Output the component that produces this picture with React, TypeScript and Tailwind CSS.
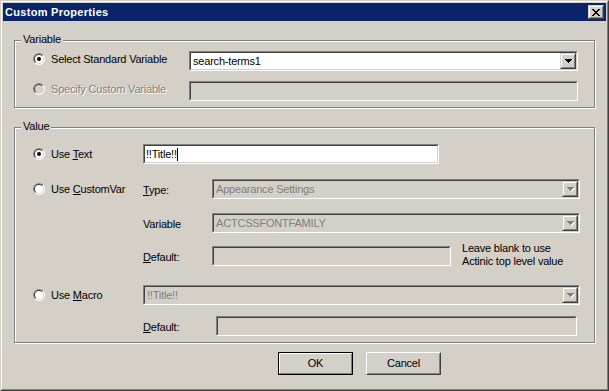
import type { ReactNode } from 'react';

const sunken = 'border border-t-[#808080] border-l-[#808080] border-r-white border-b-white';
const sunkenInner = 'border border-t-[#404040] border-l-[#404040] border-r-[#d4d0c8] border-b-[#d4d0c8]';
const raised = 'border border-t-[#d4d0c8] border-l-[#d4d0c8] border-r-[#404040] border-b-[#404040]';
const raisedInner = 'border border-t-white border-l-white border-r-[#808080] border-b-[#808080]';
const disabledText = 'text-[#808080] [text-shadow:1px_1px_0_#fff]';

function Radio({ checked, disabled }: { checked?: boolean; disabled?: boolean }) {
  return (
    <svg width="12" height="12" viewBox="0 0 12 12" className="shrink-0">
      <circle cx="6" cy="6" r="6" fill="#fff" />
      <path d="M1.757 10.243A6 6 0 0 1 10.243 1.757Z" fill="#808080" />
      <circle cx="6" cy="6" r="5" fill="#d4d0c8" />
      <path d="M2.464 9.536A5 5 0 0 1 9.536 2.464Z" fill="#404040" />
      <circle cx="6" cy="6" r="4" fill={disabled ? '#d4d0c8' : '#fff'} />
      {checked && <circle cx="6" cy="6" r="2" fill="#000" />}
    </svg>
  );
}

function Arrow({ disabled }: { disabled?: boolean }) {
  const d = 'M0 0h7v1h-1v1h-1v1h-1v1h-1v-1h-1v-1h-1v-1h-1z';
  return (
    <svg width="8" height="5" viewBox="0 0 8 5" shapeRendering="crispEdges">
      {disabled && <path d={d} fill="#fff" transform="translate(1 1)" />}
      <path d={d} fill={disabled ? '#808080' : '#000'} />
    </svg>
  );
}

function DropButton({ disabled }: { disabled?: boolean }) {
  return (
    <div className={`${raised} w-[16px] h-full shrink-0`}>
      <div className={`${raisedInner} h-full bg-[#d4d0c8] flex items-center justify-center pl-px pt-px`}>
        <Arrow disabled={disabled} />
      </div>
    </div>
  );
}

function Combo({ className, value, disabled }: { className: string; value: string; disabled?: boolean }) {
  return (
    <div className={`${sunken} h-[20px] shrink-0 ${className}`}>
      <div className={`${sunkenInner} h-full flex items-center ${disabled ? 'bg-[#d4d0c8]' : 'bg-white'}`}>
        <span className={`flex-1 pl-[2px] truncate ${disabled ? 'text-[#808080]' : 'text-black'}`}>{value}</span>
        <DropButton disabled={disabled} />
      </div>
    </div>
  );
}

function TextField({ className, children, disabled }: { className: string; children?: ReactNode; disabled?: boolean }) {
  return (
    <div className={`${sunken} h-[20px] shrink-0 ${className}`}>
      <div className={`${sunkenInner} h-full flex items-center pl-px ${disabled ? 'bg-[#d4d0c8]' : 'bg-white'}`}>
        {children}
      </div>
    </div>
  );
}

function GroupBox({ label, className, children }: { label: string; className: string; children: ReactNode }) {
  return (
    <div className={`relative flex flex-col border border-[#808080] shadow-[inset_1px_1px_0_#fff,1px_1px_0_#fff] ${className}`}>
      <span className="absolute -top-[8px] left-[6px] bg-[#d4d0c8] px-[2px] leading-[13px]">{label}</span>
      {children}
    </div>
  );
}

function CloseButton() {
  return (
    <div className={`${raised} w-[16px] h-[14px] shrink-0`}>
      <div className={`${raisedInner} h-full bg-[#d4d0c8] flex items-center justify-center`}>
        <svg width="8" height="7" viewBox="0 0 8 7" shapeRendering="crispEdges">
          <path
            fill="#000"
            d="M0 0h2v1h-2z M6 0h2v1h-2z M1 1h2v1h-2z M5 1h2v1h-2z M2 2h4v1h-4z M3 3h2v1h-2z M2 4h4v1h-4z M1 5h2v1h-2z M5 5h2v1h-2z M0 6h2v1h-2z M6 6h2v1h-2z"
          />
        </svg>
      </div>
    </div>
  );
}

export default function App() {
  return (
    <div className="w-[609px] h-[391px] bg-[#d4d0c8] border border-t-[#d4d0c8] border-l-[#d4d0c8] border-r-[#404040] border-b-[#404040] font-['Liberation_Sans',Arial,sans-serif] text-[11px] leading-[13px] tracking-[-0.2px] text-black select-none">
      <div className="h-full border border-t-white border-l-white border-r-[#808080] border-b-[#808080] p-px flex flex-col">
        {/* title bar */}
        <div className="h-[18px] bg-[#0a246a] flex items-center pl-[2px] pr-[2px]">
          <span className="flex-1 text-white font-bold tracking-[0.3px]">Custom Properties</span>
          <CloseButton />
        </div>

        <div className="px-[11px] pt-[19px] flex flex-col">
          {/* Variable */}
          <GroupBox label="Variable" className="h-[68px] pt-[10px] pl-[18px] gap-[10px]">
            <div className="flex items-center h-[20px]">
              <div className="w-[156px] flex items-center gap-[6px] mb-[4px]">
                <Radio checked />
                <span>Select Standard Variable</span>
              </div>
              <Combo className="w-[389px]" value="search-terms1" />
            </div>
            <div className="flex items-center h-[20px]">
              <div className="w-[156px] flex items-center gap-[6px] mb-[4px]">
                <Radio disabled />
                <span className={disabledText}>Specify Custom Variable</span>
              </div>
              <TextField className="w-[389px]" disabled />
            </div>
          </GroupBox>

          {/* Value */}
          <GroupBox label="Value" className="h-[216px] mt-[19px] pt-[16px] pl-[18px]">
            <div className="flex items-center h-[20px]">
              <div className="w-[110px] flex items-center gap-[6px]">
                <Radio checked />
                <span>
                  Use <span className="underline">T</span>ext
                </span>
              </div>
              <TextField className="w-[296px]">
                <span>!!Title!!</span>
                <span className="w-px h-[13px] bg-black" />
              </TextField>
            </div>

            <div className="flex items-center h-[20px] mt-[15px]">
              <div className="w-[110px] flex items-center gap-[6px]">
                <Radio />
                <span>
                  Use <span className="underline">C</span>ustomVar
                </span>
              </div>
              <span className="w-[69px] mt-[3px]">
                <span className="underline">T</span>ype:
              </span>
              <Combo className="w-[368px]" value="Appearance Settings" disabled />
            </div>

            <div className="flex items-center h-[20px] mt-[14px]">
              <div className="w-[110px]" />
              <span className="w-[69px] mt-[3px]">Variable</span>
              <Combo className="w-[368px]" value="ACTCSSFONTFAMILY" disabled />
            </div>

            <div className="flex items-start h-[20px] mt-[13px]">
              <div className="w-[110px]" />
              <span className="w-[69px] self-center mt-[3px]">
                <span className="underline">D</span>efault:
              </span>
              <TextField className="w-[239px]" disabled />
              <div className="ml-[11px] -mt-[4px] flex flex-col">
                <span>Leave blank to use</span>
                <span>Actinic top level value</span>
              </div>
            </div>

            <div className="flex items-center h-[20px] mt-[19px]">
              <div className="w-[110px] flex items-center gap-[6px]">
                <Radio />
                <span>
                  Use <span className="underline">M</span>acro
                </span>
              </div>
              <Combo className="w-[437px]" value="!!Title!!" disabled />
            </div>

            <div className="flex items-center h-[20px] mt-[11px]">
              <div className="w-[110px]" />
              <span className="w-[73px] mt-[3px]">
                <span className="underline">D</span>efault:
              </span>
              <TextField className="w-[361px]" disabled />
            </div>
          </GroupBox>
        </div>

        {/* buttons */}
        <div className="flex gap-[13px] pl-[275px] mt-[9px]">
          <div className="w-[75px] h-[23px] border border-black">
            <div className={`${raisedInner} h-full flex items-center justify-center`}>OK</div>
          </div>
          <div className="w-[75px] h-[23px] border border-t-white border-l-white border-r-[#404040] border-b-[#404040]">
            <div className="h-full border border-t-[#d4d0c8] border-l-[#d4d0c8] border-r-[#808080] border-b-[#808080] flex items-center justify-center">
              Cancel
            </div>
          </div>
        </div>
      </div>
    </div>
  );
}
